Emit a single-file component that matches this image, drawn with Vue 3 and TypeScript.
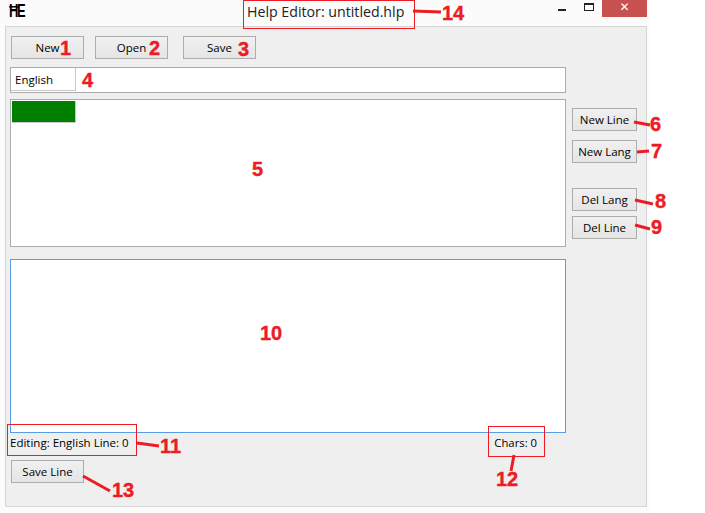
<script setup lang="ts">
interface Mark { t: string; x: number; y: number }
const marks: Mark[] = [
  { t: '1', x: 60, y: 55 }, { t: '2', x: 149, y: 55 }, { t: '3', x: 238, y: 56 },
  { t: '4', x: 82, y: 87 }, { t: '5', x: 252, y: 176 }, { t: '6', x: 650, y: 131 },
  { t: '7', x: 651, y: 158 }, { t: '8', x: 655, y: 208 }, { t: '9', x: 651, y: 234 },
  { t: '10', x: 260, y: 340 }, { t: '11', x: 160, y: 453 }, { t: '12', x: 496, y: 486 },
  { t: '13', x: 112, y: 497 }, { t: '14', x: 442, y: 20 }
]
const lines: string[] = [
  'M413 11L441 12', 'M634 122L650 125', 'M637 152L649 151', 'M635 200L653 204',
  'M635 225L650 229', 'M137 443L159 446', 'M514 455L511 471', 'M83 476L110 491'
]
const boxes = [
  { x: 243.5, y: 0.5, w: 171, h: 28 }, { x: 7.5, y: 424.5, w: 129, h: 31 }, { x: 488.5, y: 426.5, w: 56, h: 30 }
]
</script>

<template>
  <div class="window">
    <header class="titlebar">
      <span class="logo">ĦE</span>
      <span class="title">Help Editor: untitled.hlp</span>
      <div class="controls">
        <span class="min"></span>
        <span class="max"></span>
        <span class="close">✕</span>
      </div>
    </header>
    <main class="panel">
      <div class="toolbar">
        <button class="btn file">New</button>
        <button class="btn file gap-a">Open</button>
        <button class="btn file gap-b">Save</button>
      </div>
      <div class="body">
        <div class="left">
          <div class="lang-bar"><span class="lang">English</span></div>
          <div class="lines"><span class="line-item"></span></div>
          <div class="editor"></div>
          <div class="status">
            <span>Editing: English Line: 0</span>
            <span class="chars">Chars: 0</span>
          </div>
          <button class="btn file save-line">Save Line</button>
        </div>
        <div class="side">
          <button class="btn small">New Line</button>
          <button class="btn small">New Lang</button>
          <button class="btn small del">Del Lang</button>
          <button class="btn small">Del Line</button>
        </div>
      </div>
    </main>
    <svg class="notes" width="705" height="513" viewBox="0 0 705 513">
      <rect v-for="b in boxes" :key="b.x" :x="b.x" :y="b.y" :width="b.w" :height="b.h" class="box" />
      <path v-for="d in lines" :key="d" :d="d" class="lead" />
      <text v-for="m in marks" :key="m.t" :x="m.x" :y="m.y" class="num">{{ m.t }}</text>
    </svg>
  </div>
</template>

<style>
html, body { margin: 0; background: #fff; }
</style>

<style scoped>
.window {
  position: relative;
  box-sizing: border-box;
  width: 650px;
  height: 513px;
  background: #fbfbfb;
  font-family: "Open Sans", "Noto Sans", sans-serif;
  font-size: 11.5px;
  color: #000;
}
.titlebar {
  position: relative;
  display: flex;
  height: 26px;
  align-items: flex-start;
}
.logo {
  margin: 0 0 0 9px;
  font: 700 18px/23px "Liberation Sans", sans-serif;
  letter-spacing: -2px;
  color: #000;
  transform: scaleX(0.72);
  transform-origin: left center;
}
.title {
  position: absolute;
  left: 247px;
  top: 2px;
  font-size: 14.2px;
  line-height: 20px;
  color: #222;
}
.controls {
  display: flex;
  margin-left: auto;
  margin-right: 3px;
  align-items: flex-start;
}
.min {
  width: 8px;
  height: 2px;
  margin-top: 9px;
  margin-right: 18px;
  background: #222;
}
.max {
  box-sizing: border-box;
  width: 10px;
  height: 8px;
  margin-top: 3px;
  margin-right: 8px;
  border: 1px solid #222;
  border-top-width: 2px;
}
.close {
  width: 45px;
  height: 17px;
  background: #c75050;
  color: #fff;
  text-align: center;
  font: 700 12px/15px "DejaVu Sans", sans-serif;
}
.panel {
  box-sizing: border-box;
  width: 642px;
  height: 481px;
  margin-left: 5px;
  padding: 9px 9px 0 5px;
  background: #efefef;
  border: 1px solid #d6d6d6;
}
.toolbar {
  display: flex;
  margin-bottom: 8px;
}
.btn {
  box-sizing: border-box;
  height: 23px;
  padding: 0;
  border: 1px solid #adadad;
  background: linear-gradient(#f0f0f0, #e5e5e5);
  font: inherit;
  line-height: 19px;
  color: #000;
}
.file { width: 73px; }
.gap-a { margin-left: 11px; }
.gap-b { margin-left: 15px; }
.body {
  display: flex;
  margin-left: -1px;
  gap: 6px;
}
.left {
  display: flex;
  flex-direction: column;
  width: 556px;
}
.lang-bar {
  box-sizing: border-box;
  height: 26px;
  background: #fff;
  border: 1px solid #acacac;
}
.lang {
  box-sizing: border-box;
  display: block;
  width: 65px;
  height: 23px;
  padding-left: 4px;
  line-height: 23px;
  border-right: 1px solid #c8c8c8;
  border-bottom: 1px solid #c8c8c8;
}
.lines {
  box-sizing: border-box;
  height: 148px;
  margin-top: 6px;
  padding: 1px;
  background: #fff;
  border: 1px solid #acacac;
}
.line-item {
  display: block;
  box-sizing: border-box;
  width: 64px;
  height: 22px;
  background: #008000;
  border-right: 1px solid #c8c8c8;
  border-bottom: 1px solid #c8c8c8;
}
.editor {
  box-sizing: border-box;
  height: 174px;
  margin-top: 12px;
  background: #fff;
  border: 1px solid #569de5;
}
.status {
  display: flex;
  justify-content: space-between;
  height: 20px;
  padding: 0 29px 0 0;
  line-height: 20px;
}
.chars { font-size: 11.3px; }
.save-line {
  margin: 7px 0 0 1px;
}
.side {
  display: flex;
  flex-direction: column;
  width: 65px;
  padding-top: 41px;
}
.small {
  width: 65px;
  margin-bottom: 9px;
}
.small:nth-child(2) { margin-bottom: 25px; }
.small.del { margin-bottom: 5px; }
.notes {
  position: absolute;
  left: 0;
  top: 0;
  pointer-events: none;
}
.box {
  fill: none;
  stroke: #ed1c24;
  stroke-width: 1;
}
.lead {
  fill: none;
  stroke: #ed1c24;
  stroke-width: 3;
}
.num {
  fill: #ed1c24;
  stroke: #ed1c24;
  stroke-width: 0.4;
  font: 700 20px "Liberation Sans", sans-serif;
}
</style>
